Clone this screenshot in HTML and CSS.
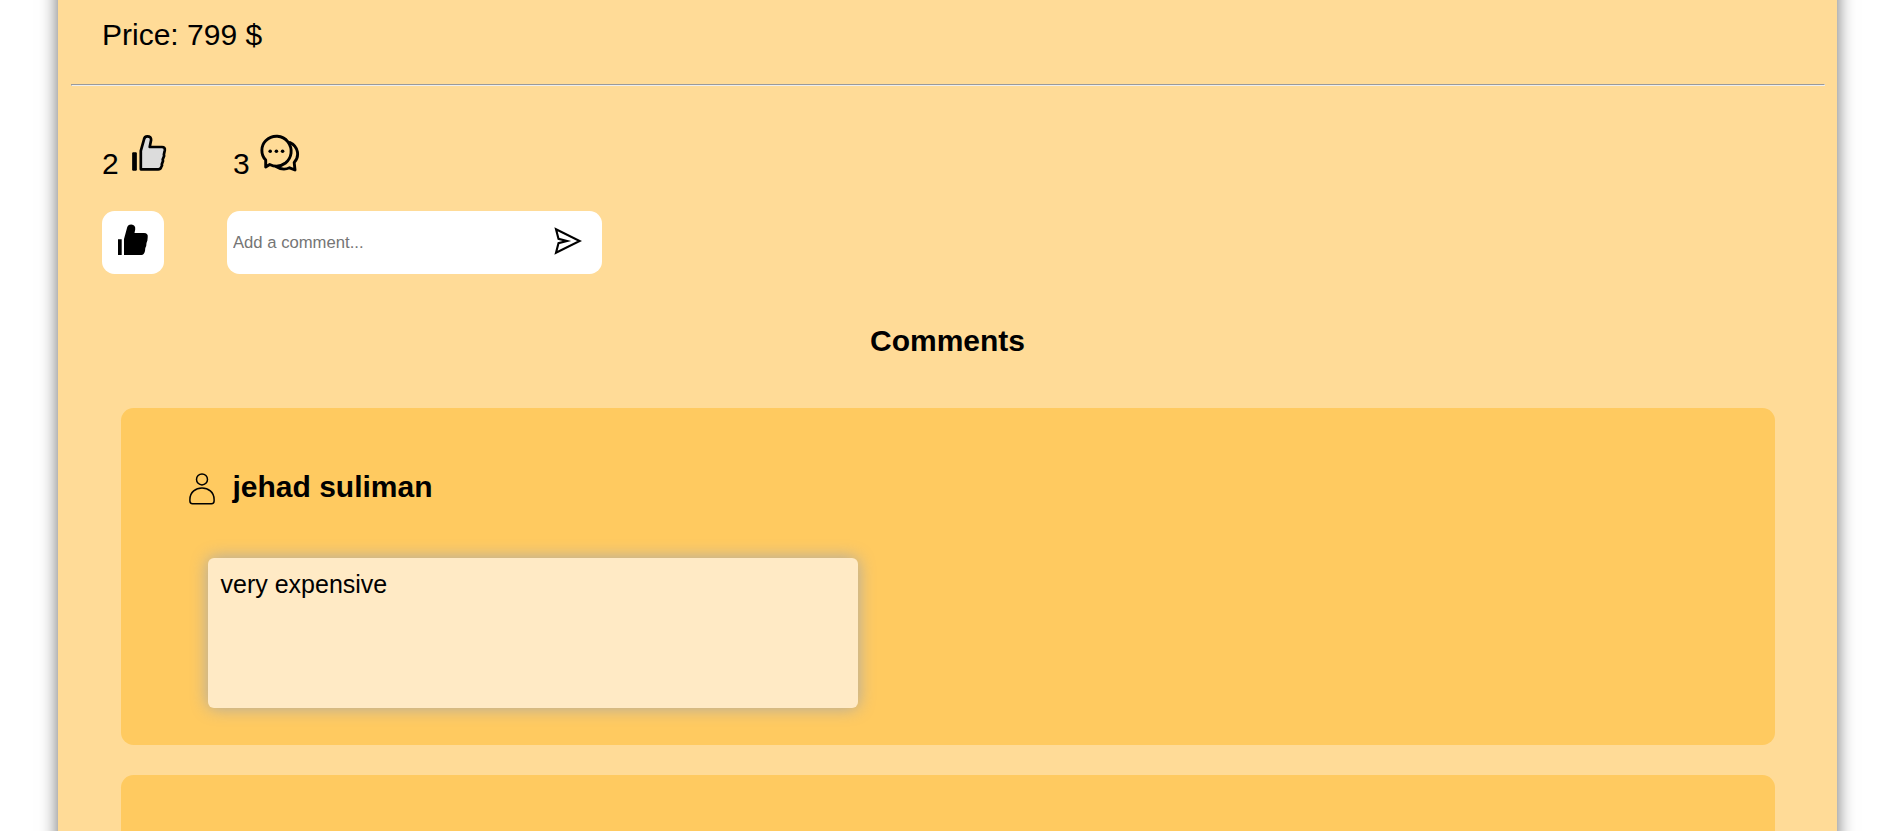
FILE: index.html
```html
<!DOCTYPE html>
<html lang="en">
<head>
<meta charset="utf-8">
<title>Product</title>
<link rel="stylesheet" href="styles.css">
</head>
<body>
<main class="product">
  <p class="price">Price: 799 $</p>
  <hr class="divider">
  <div class="stats">
    <div class="stat stat-likes">
      <span>2</span>
      <svg class="stat-icon" width="36" height="38" viewBox="0 0 36 38">
        <path d="M1.7 18.8h3.6v17.4h-3.6z" stroke="#000" stroke-linejoin="round"/>
        <path d="M9.8 35.3V16.8L13.1 5.2Q13.5 2.3 16.3 2.3Q20.3 2.3 20.1 6L18.7 13H31Q34.3 13 33.8 16.2L32.9 20.5L33.1 22L31.7 25.5L32 27L30.8 30.2L31 31.5L30 33.5Q29.4 35.3 27.2 35.3Z" fill="#dcdcdc" stroke="#000" stroke-width="2.7" stroke-linejoin="round"/>
      </svg>
    </div>
    <div class="stat">
      <span>3</span>
      <svg class="stat-icon chat-icon" width="40" height="38" viewBox="0 0 40 38" fill="none" stroke="#000" stroke-width="2.9" stroke-linejoin="round" stroke-linecap="round">
        <path d="M5.7 33V26C0.4 20.5.8 11.7 5.7 6.8C12.5.1 22.6 1 27.9 7.8C33.2 14.8 31.8 24 25.5 29C20.3 32.9 14 32.6 9.7 30.5Z"/>
        <path d="M30 8.6C38.5 12.6 39.8 22.5 34.2 28.6L35 36L29.6 33.8C25.4 35.8 20.5 35.3 16.5 32.8"/>
        <g fill="#000" stroke="none"><circle cx="10.2" cy="17.3" r="1.8"/><circle cx="16.4" cy="17.3" r="1.8"/><circle cx="22.6" cy="17.3" r="1.8"/></g>
      </svg>
    </div>
  </div>
  <div class="actions">
    <button class="like" aria-label="Like">
      <svg width="32" height="32" viewBox="0 0 32 32">
        <path d="M1 15.3h3.7V31H1zM7 31V15L9.8 4.8Q10.3.5 14.3.5Q18.8.8 18.2 5.5L17.5 9H27Q31.4 9.2 30.7 13.3L30.4 16.5L29.5 19L29.2 22L28.3 24L28 27Q27 31 24.5 31Z"/>
      </svg>
    </button>
    <form class="comment-form">
      <input class="comment-input" type="text" placeholder="Add a comment...">
      <button class="send" type="button" aria-label="Send">
        <svg width="28" height="28" viewBox="0 0 28 28">
          <path d="M2 2.3L25.7 14L2 25.8L4.5 16.2L13 14L4.5 11.8Z" fill="none" stroke="#000" stroke-width="2.1"/>
        </svg>
      </button>
    </form>
  </div>
  <h2 class="heading">Comments</h2>
  <section class="comments">
    <article class="card">
      <div class="author">
        <svg width="26" height="32" viewBox="0 0 26 32" fill="none" stroke="#000" stroke-width="1.5">
          <circle cx="13" cy="6.4" r="5.5"/>
          <path d="M.9 28V26.5C.9 11.1 25.1 11.1 25.1 26.5V28Q25.1 30.7 22.5 30.7H3.5Q.9 30.7.9 28Z"/>
        </svg>
        <h3 class="name">jehad suliman</h3>
      </div>
      <p class="comment">very expensive</p>
    </article>
    <article class="card card-next"></article>
  </section>
</main>
</body>
</html>
```
FILE: styles.css
```css
* { box-sizing: border-box; }
body {
  display: flow-root;
  margin: 0;
  height: 831px;
  overflow: hidden;
  background: #fff;
  color: #000;
  font: 30px/34px "Liberation Sans", Arial, sans-serif;
}
.product {
  width: 1779px;
  height: 891px;
  margin: -30px auto;
  padding: 48px 12.5px 0;
  background: #ffdb97;
  box-shadow: 0 0 17px #6c6c6c;
}
.price { margin: 0 0 32px 31.5px; }
.divider { margin: 0; border: 1px inset #eee; }
.stats {
  display: flex;
  height: 40px;
  margin: 48px 0 0 31.5px;
}
.stat { display: flex; align-items: flex-start; }
.stat span { padding-top: 13px; }
.stat-likes { width: 131px; }
.stat-icon { margin-left: 12px; }
.chat-icon { margin-left: 10.5px; }
.actions {
  display: flex;
  gap: 63px;
  margin: 37px 0 0 31.5px;
}
.like {
  display: flex;
  align-items: center;
  justify-content: center;
  width: 62px;
  height: 63px;
  padding: 0 0 5px;
  border: 0;
  border-radius: 12.5px;
  background: #fff;
}
.comment-form {
  display: flex;
  align-items: center;
  width: 375px;
  height: 63px;
  padding: 0 20.5px 0 6px;
  border-radius: 12.5px;
  background: #fff;
}
.comment-input {
  flex: 1;
  min-width: 0;
  padding: 0;
  border: 0;
  background: none;
  outline: 0;
  font: 16.67px "Liberation Sans", Arial, sans-serif;
}
.comment-input::placeholder { color: #757575; }
.send {
  display: flex;
  padding: 0 0 4px;
  border: 0;
  background: none;
}
.heading { margin: 50px 0; font-size: 30px; text-align: center; }
.comments {
  display: grid;
  gap: 30px;
  padding: 0 50px;
}
.card {
  height: 337px;
  padding: 62px 67px 0;
  border-radius: 12.5px;
  background: #ffca60;
}
.card-next {
  height: 56px;
  border-radius: 12.5px 12.5px 0 0;
}
.author { display: flex; gap: 18px; padding-left: 1px; }
.author svg { margin-top: 2.5px; }
.name { margin: 0; font-size: 30px; line-height: 34px; }
.comment {
  width: 650px;
  height: 150px;
  margin: 53px 0 0 20px;
  padding: 12px 13px;
  border-radius: 6px;
  background: #ffeac5;
  box-shadow: 0 0 17px #a9a9a9;
  font-size: 25px;
  line-height: 28px;
}
```
